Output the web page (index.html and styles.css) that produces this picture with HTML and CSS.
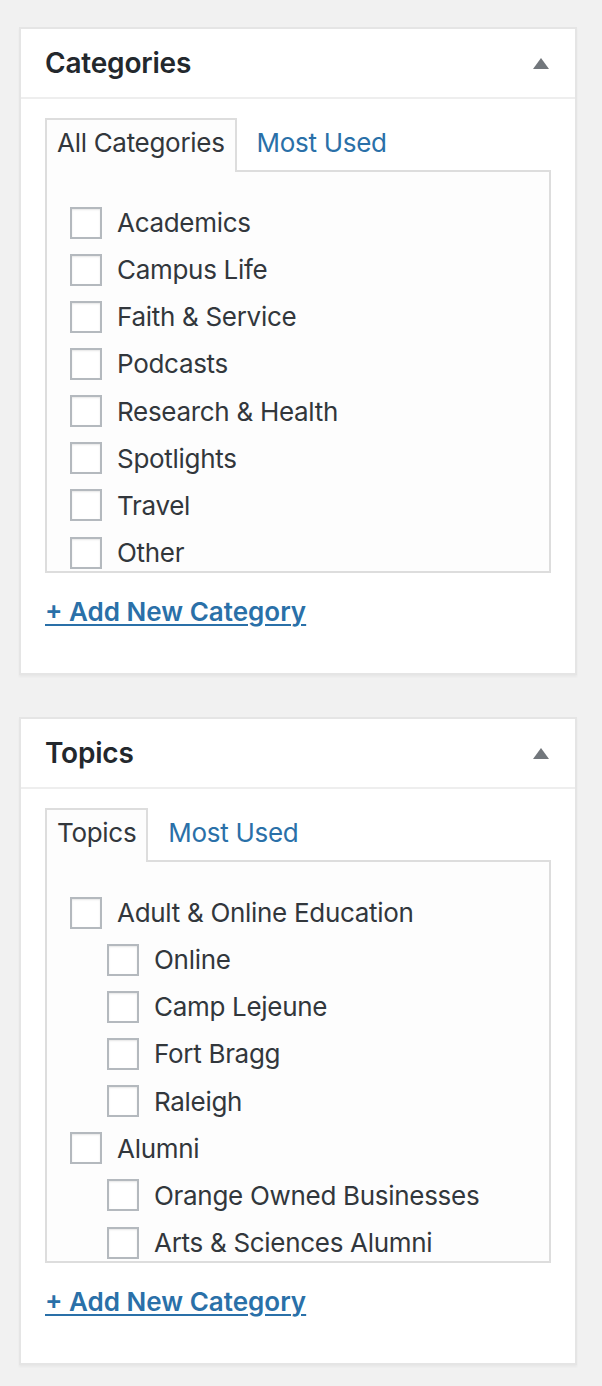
FILE: index.html
```html
<html>
<head>
<title>Categories and Topics</title>
<link rel="stylesheet" href="styles.css">
</head>

<body>
<div class="postbox">
    <div class="postboxHeader">
        <h2>Categories</h2>
        <span class="toggleArrow"></span>
    </div>
    <div class="inside">
        <ul class="tabs">
            <li class="tab active">All Categories</li>
            <li class="tab"><a href="#">Most Used</a></li>
        </ul>
        <div class="tabsPanel">
            <ul class="checklist">
                <li><label><input type="checkbox"><span>Academics</span></label></li>
                <li><label><input type="checkbox"><span>Campus Life</span></label></li>
                <li><label><input type="checkbox"><span>Faith &amp; Service</span></label></li>
                <li><label><input type="checkbox"><span>Podcasts</span></label></li>
                <li><label><input type="checkbox"><span>Research &amp; Health</span></label></li>
                <li><label><input type="checkbox"><span>Spotlights</span></label></li>
                <li><label><input type="checkbox"><span>Travel</span></label></li>
                <li><label><input type="checkbox"><span>Other</span></label></li>
            </ul>
        </div>
        <p class="adder"><a href="#">+ Add New Category</a></p>
    </div>
</div>

<div class="postbox">
    <div class="postboxHeader">
        <h2>Topics</h2>
        <span class="toggleArrow"></span>
    </div>
    <div class="inside">
        <ul class="tabs">
            <li class="tab active">Topics</li>
            <li class="tab"><a href="#">Most Used</a></li>
        </ul>
        <div class="tabsPanel">
            <ul class="checklist">
                <li><label><input type="checkbox"><span>Adult &amp; Online Education</span></label>
                    <ul class="children">
                        <li><label><input type="checkbox"><span>Online</span></label></li>
                        <li><label><input type="checkbox"><span>Camp Lejeune</span></label></li>
                        <li><label><input type="checkbox"><span>Fort Bragg</span></label></li>
                        <li><label><input type="checkbox"><span>Raleigh</span></label></li>
                    </ul>
                </li>
                <li><label><input type="checkbox"><span>Alumni</span></label>
                    <ul class="children">
                        <li><label><input type="checkbox"><span>Orange Owned Businesses</span></label></li>
                        <li><label><input type="checkbox"><span>Arts &amp; Sciences Alumni</span></label></li>
                    </ul>
                </li>
            </ul>
        </div>
        <p class="adder"><a href="#">+ Add New Category</a></p>
    </div>
</div>
</body>
</html>
```

FILE: styles.css
```css
body{
    margin: 0;
    padding: 27px 0 0 19px;
    background-color: #f1f1f1;
    font-family: Inter, "Noto Sans", sans-serif;
    color: #32373c;
}

.postbox{
    width: 558px;
    box-sizing: border-box;
    margin-bottom: 42px;
    border: 2px solid #e5e5e5;
    background-color: #fff;
    box-shadow: 0 2px 2px rgba(0,0,0,.04);
}
.postboxHeader{
    height: 68px;
    display: flex;
    align-items: center;
    justify-content: space-between;
    padding: 0 26px 0 24px;
    border-bottom: 2px solid #eee;
}
.postboxHeader h2{
    margin: 0;
    font-size: 28px;
    line-height: 38px;
    font-weight: 600;
    letter-spacing: -0.2px;
    color: #23282d;
}
.toggleArrow{
    width: 0;
    height: 0;
    border-left: 8px solid transparent;
    border-right: 8px solid transparent;
    border-bottom: 11px solid #72777c;
}

.inside{
    padding: 19px 24px 42px;
}

.tabs{
    display: flex;
    gap: 8px;
    margin: 0 0 -2px;
    padding: 0;
    list-style: none;
    position: relative;
    z-index: 1;
}
.tab{
    padding: 6px 10px 12px;
    border: 2px solid transparent;
    border-bottom: 0;
    font-size: 26px;
    line-height: 34px;
    letter-spacing: -0.3px;
}
.tab.active{
    border-color: #ddd;
    background-color: #fdfdfd;
    color: #32373c;
}
.tab a{
    color: #2a70a8;
    text-decoration: none;
}

.tabsPanel{
    height: 403px;
    box-sizing: border-box;
    padding: 0 23px;
    border: 2px solid #ddd;
    background-color: #fdfdfd;
    overflow: hidden;
}
.checklist{
    list-style: none;
    margin: 0;
    padding: 27px 0 0;
}
.checklist ul{
    list-style: none;
    margin: 0;
    padding: 0;
}
.children{
    margin-left: 37px !important;
}
.checklist label{
    height: 47.15px;
    display: flex;
    align-items: center;
    gap: 15px;
    font-size: 26px;
    letter-spacing: -0.3px;
    white-space: nowrap;
}
.checklist input{
    appearance: none;
    -webkit-appearance: none;
    width: 32px;
    height: 32px;
    margin: 0;
    flex: none;
    border: 2px solid #b4b9be;
    background-color: #fff;
    box-shadow: inset 0 1px 2px rgba(0,0,0,.1);
}

.adder{
    margin: 20px 0 0;
    font-size: 26px;
    line-height: 38px;
    font-weight: 600;
}
.adder a{
    color: #2a70a8;
    text-decoration: underline;
    text-decoration-thickness: 2px;
    text-underline-offset: 3px;
}
```
